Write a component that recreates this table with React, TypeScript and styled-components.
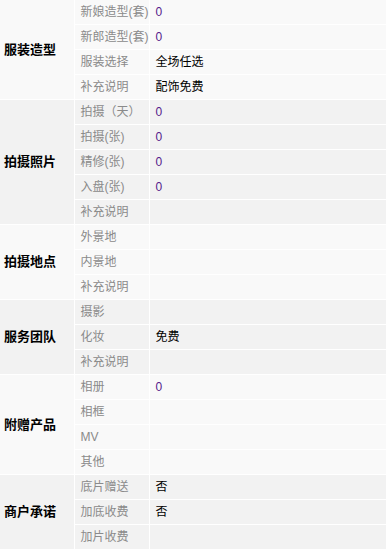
import React from "react";
import styled, { createGlobalStyle } from "styled-components";

const GlobalStyle = createGlobalStyle`
  html, body {
    margin: 0;
    padding: 0;
    background: #ffffff;
  }
  body {
    font-family: "Liberation Sans", "Noto Sans CJK SC", sans-serif;
    font-size: 12px;
  }
`;

const Table = styled.table`
  width: 386px;
  border-collapse: collapse;
  table-layout: fixed;
  margin-top: -1px;
`;

const Row = styled.tr<{ $shade: boolean }>`
  background: ${(p) => (p.$shade ? "#f2f2f2" : "#f9f9f9")};
`;

const Cell = styled.td`
  height: 24px;
  padding: 0 0 0 6px;
  border-top: 1px solid #ffffff;
  border-right: 1px solid #ffffff;
  line-height: 24px;
  white-space: nowrap;
  overflow: hidden;
  vertical-align: middle;
`;

const GroupCell = styled(Cell)`
  padding-left: 4px;
  font-weight: bold;
  font-size: 13px;
  color: #000000;
`;

const LabelCell = styled(Cell)`
  color: #8a8a8a;
`;

const ValueCell = styled(Cell)<{ $num: boolean }>`
  border-right: none;
  color: ${(p) => (p.$num ? "#551a8b" : "#000000")};
`;

type Item = [string, string];

const groups: { title: string; items: Item[] }[] = [
  {
    title: "服装造型",
    items: [
      ["新娘造型(套)", "0"],
      ["新郎造型(套)", "0"],
      ["服装选择", "全场任选"],
      ["补充说明", "配饰免费"],
    ],
  },
  {
    title: "拍摄照片",
    items: [
      ["拍摄（天）", "0"],
      ["拍摄(张)", "0"],
      ["精修(张)", "0"],
      ["入盘(张)", "0"],
      ["补充说明", ""],
    ],
  },
  {
    title: "拍摄地点",
    items: [
      ["外景地", ""],
      ["内景地", ""],
      ["补充说明", ""],
    ],
  },
  {
    title: "服务团队",
    items: [
      ["摄影", ""],
      ["化妆", "免费"],
      ["补充说明", ""],
    ],
  },
  {
    title: "附赠产品",
    items: [
      ["相册", "0"],
      ["相框", ""],
      ["MV", ""],
      ["其他", ""],
    ],
  },
  {
    title: "商户承诺",
    items: [
      ["底片赠送", "否"],
      ["加底收费", "否"],
      ["加片收费", ""],
    ],
  },
];

export default function App() {
  return (
    <>
      <GlobalStyle />
      <Table>
        <colgroup>
          <col style={{ width: 74 }} />
          <col style={{ width: 75 }} />
          <col />
        </colgroup>
        <tbody>
          {groups.map((g, gi) =>
            g.items.map(([label, value], i) => (
              <Row key={`${gi}-${i}`} $shade={gi % 2 === 1}>
                {i === 0 && (
                  <GroupCell rowSpan={g.items.length}>{g.title}</GroupCell>
                )}
                <LabelCell>{label}</LabelCell>
                <ValueCell $num={value === "0"}>{value}</ValueCell>
              </Row>
            ))
          )}
        </tbody>
      </Table>
    </>
  );
}
